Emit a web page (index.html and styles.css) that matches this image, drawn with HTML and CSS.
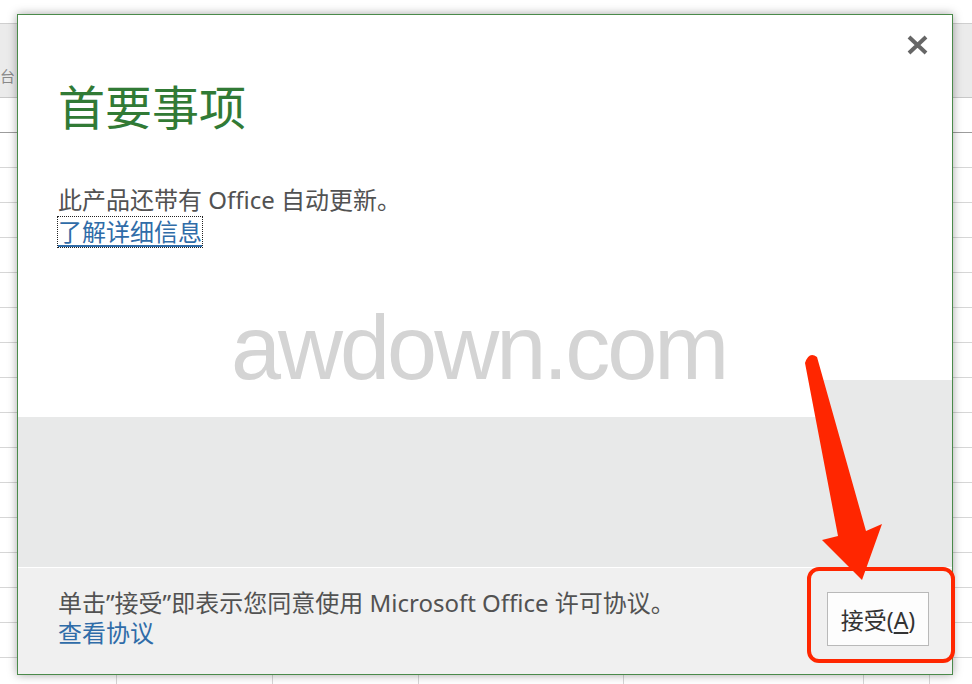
FILE: index.html
```html
<!DOCTYPE html>
<html lang="zh-CN">
<head>
<meta charset="utf-8">
<title>首要事项</title>
<link rel="stylesheet" href="styles.css">
</head>
<body>
<div class="sheet">
  <div class="sheet-top"></div>
  <div class="ribbon"><span class="ribbon-text">台</span></div>
  <div class="col-head"></div>
  <div class="grid">
    <div class="col c1"></div>
    <div class="col c2"></div>
    <div class="col c3"></div>
    <div class="col c4"></div>
    <div class="col c5"></div>
    <div class="col c6"></div>
    <div class="col c7"></div>
  </div>
</div>

<div class="dialog">
  <div class="dialog-body">
    <h1 class="title">首要事项</h1>
    <p class="msg">此产品还带有 Office 自动更新。</p>
    <a class="link focus" href="#">了解详细信息</a>
  </div>
  <div class="dialog-band"></div>
  <div class="dialog-footer">
    <div class="footer-text">
      <div>单击”接受”即表示您同意使用 Microsoft Office 许可协议。</div>
      <a class="link plain" href="#">查看协议</a>
    </div>
    <button class="btn">接受(<u>A</u>)</button>
  </div>
  <div class="watermark">awdown.com</div>
  <svg class="close" width="21" height="20" viewBox="0 0 21 20">
    <path d="M2 2 L19 18 M19 2 L2 18" stroke="#666" stroke-width="4" fill="none"/>
  </svg>
</div>

<svg class="annot" width="972" height="684" viewBox="0 0 972 684">
  <rect x="809" y="569" width="144" height="92" rx="10" ry="10" fill="none" stroke="#ff2600" stroke-width="4"/>
  <path d="M805 363 Q809 351 817 357 L866 531 L882 524 L862 580 L822 540 L838 536 Z" fill="#ff2600"/>
</svg>
</body>
</html>
```

FILE: styles.css
```css
html, body {
  margin: 0;
  padding: 0;
}
body {
  width: 972px;
  height: 684px;
  overflow: hidden;
  background: #fff;
  font-family: "Noto Sans", "Noto Sans CJK SC", sans-serif;
  position: relative;
}

/* Background spreadsheet */
.sheet {
  display: flex;
  flex-direction: column;
  height: 684px;
}
.sheet-top {
  height: 23px;
  background: #fff;
}
.ribbon {
  height: 75px;
  box-sizing: border-box;
  background: #ebebeb;
  border-top: 1px solid #cfcfcf;
  border-bottom: 1px solid #c8c8c8;
  display: flex;
  align-items: flex-end;
  padding-bottom: 12px;
}
.ribbon-text {
  margin-left: 0;
  font-size: 15px;
  line-height: 18px;
  color: #8a8a8a;
  font-family: "Noto Sans CJK SC", sans-serif;
}
.col-head {
  height: 35px;
  box-sizing: border-box;
  border-bottom: 1px solid #9c9c9c;
  background: #fff;
}
.grid {
  flex: 1;
  display: flex;
  background-image: repeating-linear-gradient(to bottom, transparent 0, transparent 34px, #d6d6d6 34px, #d6d6d6 35px);
}
.col {
  border-right: 1px solid #d6d6d6;
  box-sizing: border-box;
}
.c1 { width: 117px; }
.c2 { width: 156px; }
.c3 { width: 146px; }
.c4 { width: 205px; }
.c5 { width: 240px; }
.c6 { width: 66px; }
.c7 { flex: 1; border-right: none; }

/* Dialog */
.dialog {
  position: absolute;
  left: 17px;
  top: 14px;
  width: 936px;
  height: 661px;
  box-sizing: border-box;
  border: 1px solid #4a8a4a;
  background: #fff;
  display: flex;
  flex-direction: column;
  box-shadow: 0 0 9px rgba(0, 0, 0, 0.35);
}
.dialog-body {
  height: 365px;
  flex: none;
  box-sizing: border-box;
  padding: 66px 40px 0;
  color: #555;
}
.title {
  margin: 0;
  font-family: "Noto Sans CJK SC", sans-serif;
  font-weight: 400;
  font-size: 47px;
  line-height: 47px;
  color: #317a35;
}
.msg {
  margin: 56px 0 0;
  font-size: 24px;
  line-height: 32px;
  color: #525252;
}
.link {
  color: #2f6ca8;
  font-size: 24px;
  line-height: 30px;
}
.link.focus {
  display: inline-block;
  margin-left: -1px;
  border: 1px dotted #222;
  text-decoration: underline;
  text-underline-offset: 4px;
}
.link.plain {
  text-decoration: none;
}
.dialog-band {
  height: 187px;
  flex: none;
  background: #e8e9e9;
  border-bottom: 1px solid #fff;
}
.dialog-footer {
  flex: 1;
  background: #f0f0f0;
  display: flex;
  justify-content: space-between;
  align-items: flex-start;
  padding: 20px 23px 0 40px;
}
.footer-text {
  font-size: 24px;
  line-height: 30px;
  color: #525252;
}
.btn {
  margin-top: 4px;
  width: 102px;
  height: 54px;
  box-sizing: border-box;
  border: 1px solid #b9b9b9;
  background: #fdfdfd;
  color: #333;
  font-family: "Noto Sans", "Noto Sans CJK SC", sans-serif;
  font-size: 23px;
  padding: 0;
}
.btn u {
  text-underline-offset: 3px;
}
.watermark {
  position: absolute;
  left: 0;
  top: 285px;
  width: 802px;
  height: 117px;
  box-sizing: border-box;
  padding: 3px 0 0 213px;
  background: #fff;
  font-family: "Liberation Sans", Arial, sans-serif;
  font-size: 90px;
  line-height: 90px;
  letter-spacing: -3px;
  color: #d4d4d4;
}
.close {
  position: absolute;
  right: 24px;
  top: 20px;
}
.annot {
  position: absolute;
  left: 0;
  top: 0;
  pointer-events: none;
}
```
